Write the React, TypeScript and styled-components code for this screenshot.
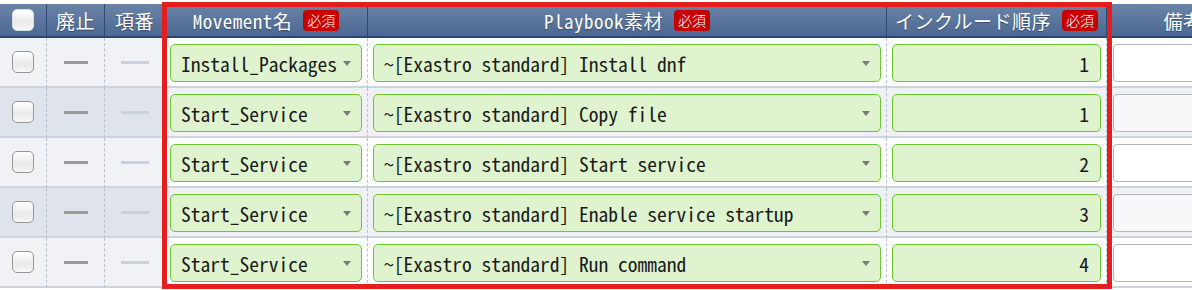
import React from 'react';
import styled, { createGlobalStyle } from 'styled-components';

const GlobalStyle = createGlobalStyle`
  html, body {
    margin: 0;
    padding: 0;
    background: #ffffff;
  }
  body {
    font-family: "Noto Sans Mono CJK JP", "Noto Sans CJK JP", "DejaVu Sans Mono", monospace;
  }
`;

const mono = `"Noto Sans Mono CJK JP", "Noto Sans CJK JP", "DejaVu Sans Mono", monospace`;

const columns = '47px 58px 60px 203px 519px 220px 152px';

const Page = styled.div`
  position: relative;
  width: 1192px;
  height: 290px;
  overflow: hidden;
  padding-top: 4px;
  box-sizing: border-box;
`;

const Table = styled.div`
  display: grid;
  grid-template-columns: ${columns};
  width: max-content;
`;

const HeadCell = styled.div<{ $last?: boolean }>`
  height: 32px;
  display: flex;
  align-items: center;
  justify-content: center;
  gap: 11px;
  background: linear-gradient(#6a83a8, #4c6891);
  border-bottom: 2px solid #2b4670;
  border-right: ${p => (p.$last ? 'none' : '1px solid #2e4a73')};
  color: #ffffff;
  font-family: ${mono};
  font-size: 19px;
  font-weight: 300;
  letter-spacing: 0.5px;
  text-shadow: 0 1px 1px rgba(0, 0, 0, 0.35);
  white-space: nowrap;
  box-sizing: content-box;
`;

const Required = styled.span`
  display: inline-flex;
  align-items: center;
  justify-content: center;
  width: 36px;
  height: 21px;
  border-radius: 4px;
  background: #c70000;
  color: #ffffff;
  font-family: "Noto Sans CJK JP", sans-serif;
  font-size: 14px;
  letter-spacing: 0;
  text-shadow: none;
`;

const Cell = styled.div<{ $even: boolean; $input?: boolean; $last?: boolean }>`
  height: 50px;
  border-bottom: 2px solid #cdd4df;
  border-right: ${p => (p.$last ? 'none' : '1px dashed #b7c0cc')};
  background: ${p =>
    p.$input ? (p.$even ? '#eff1f5' : '#ffffff') : p.$even ? '#dfe3eb' : '#f0f2f6'};
  display: flex;
  align-items: flex-start;
  justify-content: center;
  padding: 6px 5px 0;
  box-sizing: border-box;
`;

const CenterCell = styled(Cell)`
  align-items: center;
  padding: 0;
`;

const CheckBox = styled.span<{ $head?: boolean }>`
  display: block;
  width: 20px;
  height: 20px;
  border-radius: 5px;
  border: 1px solid ${p => (p.$head ? '#d9dee6' : '#979797')};
  background: linear-gradient(#ffffff, #e9e9e9 60%, #f6f6f6);
`;

const Dash = styled.span<{ $light?: boolean }>`
  display: block;
  width: ${p => (p.$light ? '28px' : '24px')};
  height: 3px;
  background: ${p => (p.$light ? '#c9d1dd' : '#9b9b9b')};
`;

const GreenBox = styled.div<{ $align?: 'left' | 'right' }>`
  position: relative;
  width: 100%;
  height: 38px;
  box-sizing: border-box;
  border: 1px solid #6ac72f;
  border-radius: 5px;
  background: #dff3cf;
  color: #1a1a1a;
  font-family: ${mono};
  font-size: 19.5px;
  font-weight: 300;
  display: flex;
  align-items: center;
  justify-content: ${p => (p.$align === 'right' ? 'flex-end' : 'flex-start')};
  padding: 0 ${p => (p.$align === 'right' ? '11px' : '26px')} 0 10px;
  white-space: nowrap;
  overflow: hidden;
`;

const Arrow = styled.span`
  position: absolute;
  right: 10px;
  top: 16px;
  width: 0;
  height: 0;
  border-left: 4px solid transparent;
  border-right: 4px solid transparent;
  border-top: 5px solid #7a7a7a;
`;

const NoteBox = styled.div<{ $even: boolean }>`
  width: 100%;
  height: 38px;
  box-sizing: border-box;
  border: 1px solid #b5b5b5;
  border-radius: 4px;
  background: ${p => (p.$even ? '#f7f8fa' : '#ffffff')};
  margin-left: 1px;
`;

const Highlight = styled.div`
  position: absolute;
  left: 162px;
  top: 2px;
  width: 950px;
  height: 287px;
  border: 5px solid #e41e1e;
  box-sizing: border-box;
  pointer-events: none;
`;

const rows = [
  { movement: 'Install_Packages', playbook: '~[Exastro standard] Install dnf', order: 1 },
  { movement: 'Start_Service', playbook: '~[Exastro standard] Copy file', order: 1 },
  { movement: 'Start_Service', playbook: '~[Exastro standard] Start service', order: 2 },
  { movement: 'Start_Service', playbook: '~[Exastro standard] Enable service startup', order: 3 },
  { movement: 'Start_Service', playbook: '~[Exastro standard] Run command', order: 4 },
];

export default function App() {
  return (
    <>
      <GlobalStyle />
      <Page>
        <Table>
          <HeadCell>
            <CheckBox $head />
          </HeadCell>
          <HeadCell>廃止</HeadCell>
          <HeadCell>項番</HeadCell>
          <HeadCell>
            Movement名<Required>必須</Required>
          </HeadCell>
          <HeadCell>
            Playbook素材<Required>必須</Required>
          </HeadCell>
          <HeadCell>
            インクルード順序<Required>必須</Required>
          </HeadCell>
          <HeadCell $last>備考</HeadCell>

          {rows.map((row, i) => {
            const even = i % 2 === 1;
            return (
              <React.Fragment key={i}>
                <CenterCell $even={even}>
                  <CheckBox />
                </CenterCell>
                <CenterCell $even={even}>
                  <Dash />
                </CenterCell>
                <CenterCell $even={even}>
                  <Dash $light />
                </CenterCell>
                <Cell $even={even} $input>
                  <GreenBox>
                    {row.movement}
                    <Arrow />
                  </GreenBox>
                </Cell>
                <Cell $even={even} $input>
                  <GreenBox>
                    {row.playbook}
                    <Arrow />
                  </GreenBox>
                </Cell>
                <Cell $even={even} $input>
                  <GreenBox $align="right">{row.order}</GreenBox>
                </Cell>
                <Cell $even={even} $input $last>
                  <NoteBox $even={even} />
                </Cell>
              </React.Fragment>
            );
          })}
        </Table>
        <Highlight />
      </Page>
    </>
  );
}
